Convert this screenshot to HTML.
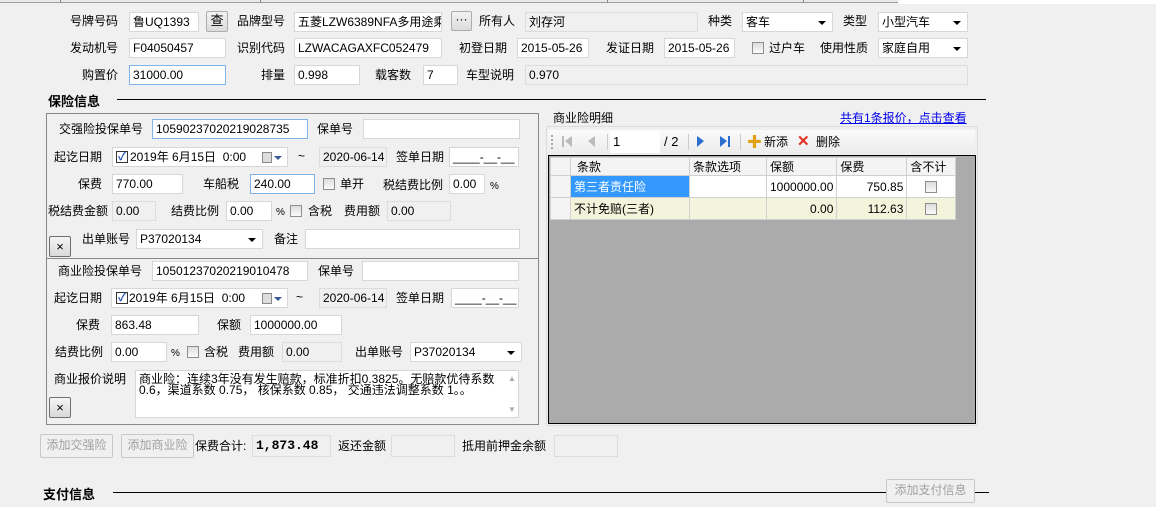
<!DOCTYPE html>
<html><head><meta charset="utf-8">
<style>
*{box-sizing:border-box;margin:0;padding:0}
body{width:1156px;height:507px;background:#f0f0f0;position:relative;overflow:hidden;font-family:"Liberation Sans","Noto Sans CJK SC",sans-serif;font-size:12px;color:#000}
.a{position:absolute;white-space:nowrap}
.l{position:absolute;white-space:nowrap;line-height:20px;height:20px}
.i{position:absolute;height:20px;background:#fff;border:1px solid #d7d7d7;line-height:18px;padding-left:3px;white-space:nowrap;font-size:12px;overflow:hidden}
.g{background:#f0f0f0;border-color:#dcdcdc}
.f{border-color:#7eb4ea}
.sel{overflow:visible}
.sel::after{content:"";position:absolute;right:6px;top:8px;border-left:4px solid transparent;border-right:4px solid transparent;border-top:4px solid #000}
.cb{position:absolute;width:12px;height:12px;border:1px solid #8f8f8f;background:linear-gradient(#ddd,#fafafa)}
.btn{position:absolute;border:1px solid #adadad;border-radius:2px;background:linear-gradient(#f2f2f2,#dcdcdc);text-align:center;line-height:18px}
.dis{position:absolute;border:1px solid #c8c8c8;border-radius:2px;background:#f0f0f0;color:#a0a0a0;text-align:center;line-height:20px}
.x{position:absolute;width:22px;height:21px;border:1px solid #707070;border-radius:2px;background:linear-gradient(#f4f4f4,#dadada);text-align:center;line-height:19px;font-size:13px}
.ck{position:absolute;width:12px;height:12px;border:1px solid #333;background:#fff;color:#1c4fb5;font-size:11px;line-height:10px;text-align:center;font-weight:bold}
table{border-collapse:collapse;position:absolute}
td{border:1px solid #d0d0d0;height:22px;padding:0 3px}
</style></head><body>
<div class="a" style="left:0;top:0;width:898px;height:3px;border-bottom:1px solid #a0a0a0;background:#e8e8e8"></div>
<div class="a" style="left:60px;top:0;width:1px;height:3px;background:#888"></div>
<div class="a" style="left:260px;top:0;width:1px;height:3px;background:#888"></div>
<div class="a" style="left:607px;top:0;width:1px;height:3px;background:#888"></div>
<div class="a" style="left:803px;top:0;width:1px;height:3px;background:#888"></div>
<div class="a" style="left:898px;top:0;width:258px;height:4px;background:#fff"></div>

<div class="l" style="left:70px;top:11px">号牌号码</div>
<div class="i" style="left:129px;top:12px;width:70px">鲁UQ1393</div>
<div class="btn" style="left:206px;top:11px;width:22px;height:21px;font-size:13px">查</div>
<div class="l" style="left:237px;top:11px">品牌型号</div>
<div class="i" style="left:294px;top:12px;width:148px">五菱LZW6389NFA多用途乘用</div>
<div class="btn" style="left:451px;top:11px;width:21px;height:20px;line-height:14px">···</div>
<div class="l" style="left:479px;top:11px">所有人</div>
<div class="i g" style="left:525px;top:12px;width:173px">刘存河</div>
<div class="l" style="left:708px;top:11px">种类</div>
<div class="i sel" style="left:742px;top:12px;width:91px">客车</div>
<div class="l" style="left:843px;top:11px">类型</div>
<div class="i sel" style="left:878px;top:12px;width:90px">小型汽车</div>

<div class="l" style="left:70px;top:38px">发动机号</div>
<div class="i" style="left:129px;top:38px;width:97px">F04050457</div>
<div class="l" style="left:237px;top:38px">识别代码</div>
<div class="i" style="left:294px;top:38px;width:148px">LZWACAGAXFC052479</div>
<div class="l" style="left:459px;top:38px">初登日期</div>
<div class="i" style="left:517px;top:38px;width:72px">2015-05-26</div>
<div class="l" style="left:606px;top:38px">发证日期</div>
<div class="i" style="left:664px;top:38px;width:71px">2015-05-26</div>
<div class="cb" style="left:752px;top:42px"></div>
<div class="l" style="left:769px;top:38px">过户车</div>
<div class="l" style="left:820px;top:38px">使用性质</div>
<div class="i sel" style="left:878px;top:38px;width:90px">家庭自用</div>

<div class="l" style="left:82px;top:65px">购置价</div>
<div class="i f" style="left:129px;top:65px;width:97px">31000.00</div>
<div class="l" style="left:261px;top:65px">排量</div>
<div class="i" style="left:294px;top:65px;width:66px">0.998</div>
<div class="l" style="left:375px;top:65px">载客数</div>
<div class="i" style="left:423px;top:65px;width:35px">7</div>
<div class="l" style="left:466px;top:65px">车型说明</div>
<div class="i g" style="left:525px;top:65px;width:443px">0.970</div>

<div class="a" style="left:48px;top:91px;font-weight:bold;font-size:13px">保险信息</div>
<div class="a" style="left:117px;top:99px;width:869px;height:1px;background:#000"></div>

<div class="a" style="left:46px;top:113px;width:493px;height:312px;border:1px solid #888"></div>
<div class="a" style="left:46px;top:258px;width:493px;height:1px;background:#888"></div>

<div class="l" style="left:59px;top:119px">交强险投保单号</div>
<div class="i f" style="left:152px;top:119px;width:156px">10590237020219028735</div>
<div class="l" style="left:317px;top:119px">保单号</div>
<div class="i" style="left:363px;top:119px;width:157px"></div>

<div class="l" style="left:54px;top:147px">起讫日期</div>
<div class="i" style="left:112px;top:147px;width:176px;padding-left:17px;overflow:visible">2019年 6月15日 &nbsp;0:00</div>
<div class="ck" style="left:116px;top:151px">✓</div>
<div class="a" style="left:262px;top:152px;width:10px;height:11px;border:1px solid #888;background:#ddd"></div>
<div class="a" style="left:274px;top:156px;border-left:4px solid transparent;border-right:4px solid transparent;border-top:4px solid #3b5a9a"></div>
<div class="l" style="left:298px;top:146px">~</div>
<div class="i g" style="left:319px;top:147px;width:68px">2020-06-14</div>
<div class="l" style="left:396px;top:147px">签单日期</div>
<div class="i" style="left:449px;top:147px;width:70px">____-__-__</div>

<div class="l" style="left:78px;top:174px">保费</div>
<div class="i" style="left:112px;top:174px;width:71px">770.00</div>
<div class="l" style="left:203px;top:174px">车船税</div>
<div class="i f" style="left:250px;top:174px;width:65px">240.00</div>
<div class="cb" style="left:323px;top:178px"></div>
<div class="l" style="left:340px;top:174px">单开</div>
<div class="l" style="left:383px;top:175px">税结费比例</div>
<div class="i" style="left:449px;top:174px;width:36px">0.00</div>
<div class="l" style="left:490px;top:177px;font-size:10px">%</div>

<div class="l" style="left:48px;top:201px">税结费金额</div>
<div class="i g" style="left:112px;top:201px;width:44px">0.00</div>
<div class="l" style="left:171px;top:201px">结费比例</div>
<div class="i" style="left:226px;top:201px;width:46px">0.00</div>
<div class="l" style="left:276px;top:203px;font-size:10px">%</div>
<div class="cb" style="left:290px;top:205px"></div>
<div class="l" style="left:308px;top:201px">含税</div>
<div class="l" style="left:344px;top:201px">费用额</div>
<div class="i g" style="left:387px;top:201px;width:64px">0.00</div>

<div class="x" style="left:49px;top:236px">×</div>
<div class="l" style="left:82px;top:229px">出单账号</div>
<div class="i sel" style="left:136px;top:229px;width:127px">P37020134</div>
<div class="l" style="left:274px;top:229px">备注</div>
<div class="i" style="left:305px;top:229px;width:215px"></div>

<div class="l" style="left:58px;top:261px">商业险投保单号</div>
<div class="i" style="left:152px;top:261px;width:156px">10501237020219010478</div>
<div class="l" style="left:318px;top:261px">保单号</div>
<div class="i" style="left:362px;top:261px;width:157px"></div>

<div class="l" style="left:54px;top:288px">起讫日期</div>
<div class="i" style="left:111px;top:288px;width:177px;padding-left:17px;overflow:visible">2019年 6月15日 &nbsp;0:00</div>
<div class="ck" style="left:116px;top:292px">✓</div>
<div class="a" style="left:262px;top:293px;width:10px;height:11px;border:1px solid #888;background:#ddd"></div>
<div class="a" style="left:274px;top:297px;border-left:4px solid transparent;border-right:4px solid transparent;border-top:4px solid #3b5a9a"></div>
<div class="l" style="left:296px;top:287px">~</div>
<div class="i g" style="left:319px;top:288px;width:68px">2020-06-14</div>
<div class="l" style="left:396px;top:288px">签单日期</div>
<div class="i" style="left:451px;top:288px;width:68px">____-__-__</div>

<div class="l" style="left:76px;top:315px">保费</div>
<div class="i" style="left:111px;top:315px;width:88px">863.48</div>
<div class="l" style="left:217px;top:315px">保额</div>
<div class="i" style="left:250px;top:315px;width:92px">1000000.00</div>

<div class="l" style="left:55px;top:342px">结费比例</div>
<div class="i" style="left:111px;top:342px;width:56px">0.00</div>
<div class="l" style="left:171px;top:344px;font-size:10px">%</div>
<div class="cb" style="left:187px;top:346px"></div>
<div class="l" style="left:204px;top:342px">含税</div>
<div class="l" style="left:238px;top:342px">费用额</div>
<div class="i g" style="left:282px;top:342px;width:60px">0.00</div>
<div class="l" style="left:355px;top:342px">出单账号</div>
<div class="i sel" style="left:410px;top:342px;width:112px">P37020134</div>

<div class="l" style="left:54px;top:369px">商业报价说明</div>
<div class="i" style="left:135px;top:370px;width:384px;height:48px;white-space:normal;line-height:11px;padding:3px 18px 0 3px;font-size:12px">商业险：连续3年没有发生赔款，标准折扣0.3825。无赔款优待系数0.6，渠道系数 0.75， 核保系数 0.85， 交通违法调整系数 1。。</div>
<div class="a" style="left:508px;top:374px;color:#aaa;font-size:8px">▲</div>
<div class="a" style="left:508px;top:405px;color:#aaa;font-size:8px">▼</div>
<div class="x" style="left:49px;top:397px">×</div>

<div class="a" style="left:546px;top:126px;width:432px;height:300px;border:1px solid #dcdcdc;border-radius:3px;background:#f0f0f0"></div>
<div class="a" style="left:551px;top:110px;padding:0 2px;background:#f0f0f0;line-height:16px">商业险明细</div>
<div class="a" style="left:837px;top:110px;padding:0 3px;background:#f0f0f0;color:#0000ee;text-decoration:underline;line-height:16px">共有1条报价，点击查看</div>
<div class="a" style="left:548px;top:130px;width:427px;height:24px;background:linear-gradient(#fafafa,#ececec)"></div>
<div class="a" style="left:551px;top:135px;width:2px;height:14px;border-left:2px dotted #aaa"></div>
<div class="a" style="left:562px;top:136px;width:2px;height:11px;background:#bbb"></div>
<div class="a" style="left:565px;top:136px;border-top:5px solid transparent;border-bottom:6px solid transparent;border-right:7px solid #bbb"></div>
<div class="a" style="left:588px;top:136px;border-top:5px solid transparent;border-bottom:6px solid transparent;border-right:7px solid #bbb"></div>
<div class="a" style="left:607px;top:134px;width:1px;height:16px;background:#ccc"></div>
<div class="a" style="left:610px;top:131px;width:50px;height:22px;background:#fff;line-height:22px;padding-left:3px;font-size:13px">1</div>
<div class="a" style="left:664px;top:131px;line-height:22px;font-size:13px">/ 2</div>
<div class="a" style="left:688px;top:134px;width:1px;height:16px;background:#ccc"></div>
<div class="a" style="left:697px;top:136px;border-top:5px solid transparent;border-bottom:6px solid transparent;border-left:7px solid #2a6fd0"></div>
<div class="a" style="left:720px;top:136px;border-top:5px solid transparent;border-bottom:6px solid transparent;border-left:7px solid #2a6fd0"></div>
<div class="a" style="left:728px;top:136px;width:2px;height:11px;background:#2a6fd0"></div>
<div class="a" style="left:740px;top:134px;width:1px;height:16px;background:#ccc"></div>
<div class="a" style="left:747px;top:137px;font-weight:bold;color:#e0a010;font-size:15px;line-height:11px">✚</div>
<div class="a" style="left:764px;top:131px;line-height:22px">新添</div>
<div class="a" style="left:797px;top:132px;color:#e03020;font-size:15px;line-height:20px;font-weight:bold">✕</div>
<div class="a" style="left:816px;top:131px;line-height:22px">删除</div>

<div class="a" style="left:548px;top:155px;width:428px;height:269px;background:#ababab;border:1px solid #000"></div>
<table style="left:550px;top:157px;background:#fff">
<tr style="background:#f4f4f4"><td style="width:20px;height:18px"></td><td style="width:119px;height:18px;padding-left:6px">条款</td><td style="width:77px;height:18px">条款选项</td><td style="width:70px;height:18px">保额</td><td style="width:70px;height:18px">保费</td><td style="width:49px;height:18px">含不计</td></tr>
<tr><td style="background:#f4f4f4"></td><td style="background:#3399ff;color:#fff">第三者责任险</td><td></td><td style="text-align:right">1000000.00</td><td style="text-align:right">750.85</td><td style="position:relative"><div class="cb" style="left:18px;top:5px"></div></td></tr>
<tr style="background:#f4f4dc"><td style="background:#f4f4f4"></td><td>不计免赔(三者)</td><td></td><td style="text-align:right">0.00</td><td style="text-align:right">112.63</td><td style="position:relative"><div class="cb" style="left:18px;top:5px"></div></td></tr>
</table>

<div class="dis" style="left:40px;top:434px;width:73px;height:24px">添加交强险</div>
<div class="dis" style="left:121px;top:434px;width:73px;height:24px">添加商业险</div>
<div class="l" style="left:195px;top:436px">保费合计:</div>
<div class="i g" style="left:252px;top:435px;width:79px;height:22px;font-weight:bold;font-family:'Liberation Mono',monospace;font-size:13px;line-height:19px">1,873.48</div>
<div class="l" style="left:338px;top:436px">返还金额</div>
<div class="i g" style="left:391px;top:435px;width:64px;height:22px"></div>
<div class="l" style="left:462px;top:436px">抵用前押金余额</div>
<div class="i g" style="left:554px;top:435px;width:64px;height:22px"></div>

<div class="a" style="left:43px;top:484px;font-weight:bold;font-size:13px">支付信息</div>
<div class="a" style="left:113px;top:492px;width:876px;height:1px;background:#000"></div>
<div class="dis" style="left:886px;top:479px;width:89px;height:24px">添加支付信息</div>
</body></html>
